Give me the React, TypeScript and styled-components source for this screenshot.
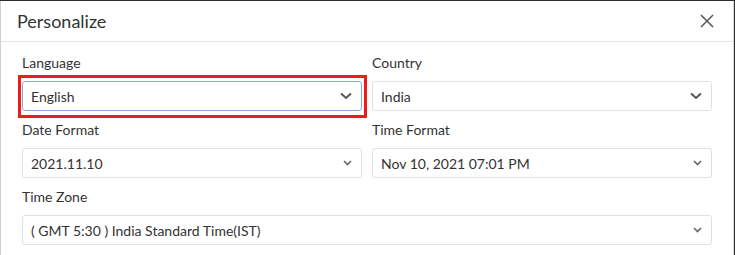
import React from 'react';
import styled, {createGlobalStyle} from 'styled-components';

const GlobalStyle = createGlobalStyle`
  html, body {
    margin: 0;
    padding: 0;
    background: #2e2e2e;
    font-family: Lato, "Open Sans", sans-serif;
    color: #333;
  }
`;

type FieldType = {
    label: string
    value: string
    focused?: boolean
    bigChevron?: boolean
    wide?: boolean
}

const fields: FieldType[] = [
    {label: 'Language', value: 'English', focused: true, bigChevron: true},
    {label: 'Country', value: 'India', bigChevron: true},
    {label: 'Date Format', value: '2021.11.10'},
    {label: 'Time Format', value: 'Nov 10, 2021 07:01 PM'},
    {label: 'Time Zone', value: '( GMT 5:30 ) India Standard Time(IST)', wide: true},
]

const Chevron = ({big}: { big?: boolean }) => (
    big
        ? <svg width="12" height="8" viewBox="0 0 12 8">
            <path d="M1 1.5 L6 6 L11 1.5" fill="none" stroke="#555" strokeWidth="2"/>
        </svg>
        : <svg width="9" height="6" viewBox="0 0 9 6">
            <path d="M1 1 L4.5 4.5 L8 1" fill="none" stroke="#666" strokeWidth="1.6"/>
        </svg>
)

const CloseIcon = () => (
    <svg width="14" height="14" viewBox="0 0 14 14">
        <path d="M1 1 L13 13 M13 1 L1 13" stroke="#555" strokeWidth="1.5" fill="none"/>
    </svg>
)

export default function App() {
    return (
        <>
            <GlobalStyle/>
            <Dialog>
                <Header>
                    <Title>Personalize</Title>
                    <CloseButton aria-label="Close"><CloseIcon/></CloseButton>
                </Header>
                <Body>
                    {fields.map(f => (
                        <Field key={f.label} $wide={f.wide}>
                            <Label>{f.label}</Label>
                            <SelectBox $focused={f.focused}>
                                <span>{f.value}</span>
                                <Chevron big={f.bigChevron}/>
                            </SelectBox>
                        </Field>
                    ))}
                </Body>
            </Dialog>
        </>
    )
}

const Dialog = styled.div`
  margin: 1px 1px 0 0;
  height: 254px;
  background: #fff;
  border-left: 1px solid #cfcfcf;
  border-right: 1px solid #d8d8d8;
  box-sizing: border-box;
  overflow: hidden;
`;

const Header = styled.div`
  height: 40px;
  display: flex;
  align-items: center;
  justify-content: space-between;
  padding: 0 19px 0 16px;
  border-bottom: 1px solid #e4e4e4;
`;

const Title = styled.h2`
  margin: 0;
  font-size: 18px;
  font-weight: 400;
  color: #333;
`;

const CloseButton = styled.button`
  border: none;
  background: none;
  padding: 0;
  display: flex;
  cursor: pointer;
`;

const Body = styled.div`
  display: grid;
  grid-template-columns: 340px 340px;
  column-gap: 10px;
  row-gap: 10px;
  padding: 12px 0 0 21px;
`;

const Field = styled.div<{ $wide?: boolean }>`
  display: flex;
  flex-direction: column;
  gap: 10px;
  grid-column: ${p => p.$wide ? '1 / span 2' : 'auto'};
`;

const Label = styled.label`
  font-size: 14px;
  line-height: 17px;
  color: #333;
`;

const SelectBox = styled.div<{ $focused?: boolean }>`
  position: relative;
  height: 30px;
  box-sizing: border-box;
  display: flex;
  align-items: center;
  justify-content: space-between;
  padding: 0 9px 0 8px;
  font-size: 14px;
  color: #333;
  border: 1px solid ${p => p.$focused ? '#86a9e3' : '#dde0e6'};
  border-radius: 3px;

  ${p => p.$focused && `
    &::after {
      content: '';
      position: absolute;
      left: -5px;
      right: -6px;
      top: -7px;
      bottom: -8px;
      border: 3px solid #ee1c1c;
      pointer-events: none;
    }
  `}
`;
